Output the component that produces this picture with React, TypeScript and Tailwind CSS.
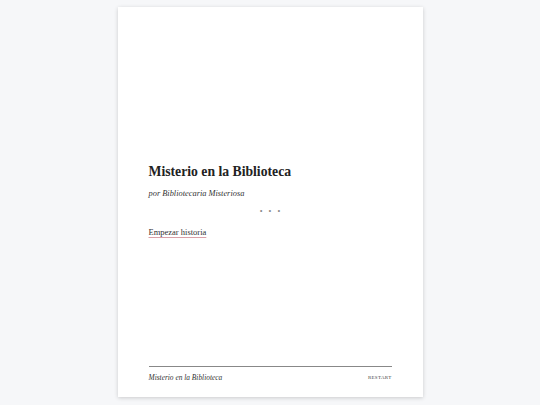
export default function App() {
  return (
    <div className="w-[540px] h-[405px] bg-[#f6f7f9] flex justify-center pt-[7px]" style={{ fontFamily: '"Liberation Serif", serif' }}>
      <div className="w-[305px] h-[390px] bg-white shadow-[0_1px_4px_rgba(0,0,0,0.18)] flex flex-col px-[31px]">
        <div className="flex-1 flex flex-col pt-[157px]">
          <h1 className="text-[13.7px] font-bold text-[#222] leading-[16px]">Misterio en la Biblioteca</h1>
          <p className="mt-[8px] text-[8.4px] italic text-[#333] leading-[12px]">por Bibliotecaria Misteriosa</p>
          <div className="mt-[7px] flex justify-center gap-[6px] text-[#888] text-[8px] leading-[10px]">
            <span>•</span><span>•</span><span>•</span>
          </div>
          <a className="mt-[9px] text-[8.5px] text-[#333] leading-[12px] underline decoration-[#d9a0a8] underline-offset-2 self-start">Empezar historia</a>
        </div>
        <div className="border-t border-[#888] mb-[14px] pt-[5px] flex justify-between items-center">
          <span className="text-[7.4px] italic text-[#333]">Misterio en la Biblioteca</span>
          <span className="text-[5px] tracking-[0.06em] text-[#444]">RESTART</span>
        </div>
      </div>
    </div>
  );
}
